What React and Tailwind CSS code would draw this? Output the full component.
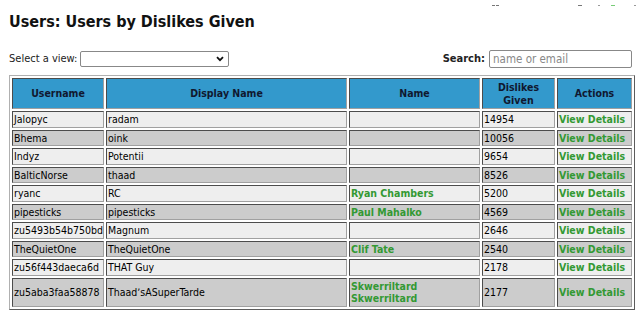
import React from "react";

const rows = [
  ["Jalopyc", "radam", "", "14954"],
  ["Bhema", "oink", "", "10056"],
  ["Indyz", "Potentii", "", "9654"],
  ["BalticNorse", "thaad", "", "8526"],
  ["ryanc", "RC", "Ryan Chambers", "5200"],
  ["pipesticks", "pipesticks", "Paul Mahalko", "4569"],
  ["zu5493b54b750bd", "Magnum", "", "2646"],
  ["TheQuietOne", "TheQuietOne", "Clif Tate", "2540"],
  ["zu56f443daeca6d", "THAT Guy", "", "2178"],
  ["zu5aba3faa58878", "Thaad\u02bcsASuperTarde", "Skwerriltard Skwerriltard", "2177"],
];

const cell =
  "border border-[#a0a0a0] [border-style:inset] px-[1px] py-[1px] align-middle text-left";
const th =
  "border border-[#a0a0a0] [border-style:inset] px-[1px] py-[1px] align-middle text-center font-bold text-[#101830] bg-[#3399cc]";

export default function App() {
  return (
    <div
      className="w-[640px] h-[310px] overflow-hidden bg-white text-black text-[10.5px] leading-[12.5px]"
      style={{ fontFamily: '"DejaVu Sans Condensed", "DejaVu Sans", Verdana, sans-serif' }}
    >
      <div className="flex h-[6px] items-end pl-[492px]">
        <div className="w-[3px] h-[1px] bg-[#777]" />
        <div className="w-[3px] h-[1px] bg-[#777] ml-[1px]" />
        <div className="w-[4px] h-[1px] bg-[#777] ml-[79px]" />
        <div className="w-[2px] h-[1px] bg-[#999] ml-[16px]" />
        <div className="w-[4px] h-[1px] bg-[#7c7] ml-[11px]" />
        <div className="w-[2px] h-[1px] bg-[#999] ml-[19px]" />
      </div>
      <h1 className="ml-[9px] mt-[6px] text-[16px] leading-[20px] font-bold text-[#111]">
        Users: Users by Dislikes Given
      </h1>
      <div className="flex items-center justify-between ml-[9px] mr-[8px] mt-[18px] h-[18px] text-[11px]">
        <div className="flex items-center">
          <span className="text-[#222]">Select a view:</span>
          <div className="ml-[3px] w-[149px] h-[16px] border border-[#888] rounded-[2px] flex items-center justify-end pr-[4px]">
            <svg width="8" height="6" viewBox="0 0 8 6">
              <path d="M1 1.2 L4 4.2 L7 1.2" stroke="#111" strokeWidth="1.8" fill="none" />
            </svg>
          </div>
        </div>
        <div className="flex items-center">
          <span className="font-bold text-[#222]">Search:</span>
          <div className="ml-[4px] w-[143px] h-[18px] border border-[#888] rounded-[2px] flex items-center pl-[3px] text-[#888] text-[11.5px]">
            name or email
          </div>
        </div>
      </div>
      <table className="ml-[9px] mt-[7px] w-[622px] table-fixed border-separate border-spacing-[2px] border border-[#b0b0b0] [border-style:outset]">
        <colgroup>
          <col className="w-[92px]" />
          <col className="w-[241px]" />
          <col className="w-[131px]" />
          <col className="w-[73px]" />
          <col className="w-[75px]" />
        </colgroup>
        <thead>
          <tr className="h-[31px]">
            <th className={th}>Username</th>
            <th className={th}>Display Name</th>
            <th className={th}>Name</th>
            <th className={th}>Dislikes Given</th>
            <th className={th}>Actions</th>
          </tr>
        </thead>
        <tbody>
          {rows.map((r, i) => {
            const bg = i % 2 === 0 ? "bg-[#eeeeee]" : "bg-[#cccccc]";
            return (
              <tr key={i}>
                <td className={`${cell} ${bg} whitespace-nowrap`}>{r[0]}</td>
                <td className={`${cell} ${bg}`}>{r[1]}</td>
                <td className={`${cell} ${bg} font-bold text-[#339933]`}>{r[2]}</td>
                <td className={`${cell} ${bg}`}>{r[3]}</td>
                <td className={`${cell} ${bg} font-bold text-[#339933] whitespace-nowrap`}>View Details</td>
              </tr>
            );
          })}
        </tbody>
      </table>
    </div>
  );
}
